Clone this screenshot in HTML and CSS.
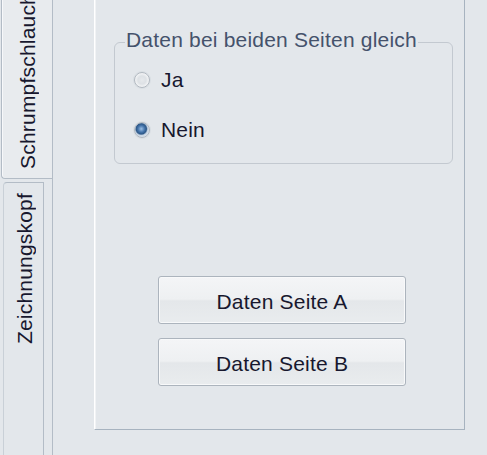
FILE: index.html
```html
<!DOCTYPE html>
<html lang="de">
<head>
<meta charset="utf-8">
<title>Schrumpfschlauch</title>
<link rel="stylesheet" href="styles.css">
</head>
<body>
<div class="window">
  <div class="tabstrip">
    <div class="tab tab-active"><span class="tab-label">Schrumpfschlauch</span></div>
    <div class="tab tab-idle"><span class="tab-label">Zeichnungskopf</span></div>
  </div>
  <div class="page">
    <div class="panel">
      <div class="group">
        <span class="legend">Daten bei beiden Seiten gleich</span>
        <label class="radio-row"><span class="radio"></span><span class="radio-text">Ja</span></label>
        <label class="radio-row second"><span class="radio checked"></span><span class="radio-text">Nein</span></label>
      </div>
      <div class="buttons">
        <button class="btn">Daten Seite A</button>
        <button class="btn">Daten Seite B</button>
      </div>
    </div>
  </div>
</div>
</body>
</html>
```
FILE: styles.css
```css
html, body {
  margin: 0;
  padding: 0;
}
body {
  width: 487px;
  height: 455px;
  overflow: hidden;
  background: #e3e7eb;
  font-family: "Liberation Sans", Arial, sans-serif;
  font-size: 21px;
  letter-spacing: 0.2px;
  color: #17172e;
}
.window {
  display: flex;
  height: 455px;
}
.tabstrip {
  width: 52px;
  flex-shrink: 0;
  display: flex;
  flex-direction: column;
}
.tab {
  display: flex;
  flex-direction: column;
  align-items: center;
  box-sizing: border-box;
}
.tab-label {
  writing-mode: vertical-rl;
  transform: rotate(180deg);
  line-height: 24px;
  white-space: nowrap;
}
.tab-active {
  height: 179px;
  margin-left: 1px;
  width: 51px;
  background: #e8ebee;
  border-left: 1px solid #b3bcc6;
  border-bottom: 1px solid #b3bcc6;
  border-bottom-left-radius: 4px;
  box-shadow: inset 1px 0 0 #f7f8fa;
  justify-content: flex-end;
  padding-bottom: 9px;
  overflow: hidden;
}
.tab-active .tab-label {
  margin-left: 1px;
}
.tab-idle {
  flex: 1;
  margin-top: 3px;
  margin-left: 3px;
  width: 41px;
  background: #e3e7eb;
  border-left: 1px solid #c9d0d7;
  border-top: 1px solid #b3bcc6;
  border-right: 1px solid #b3bcc6;
  border-top-left-radius: 4px;
  justify-content: flex-start;
  padding-top: 10px;
}
.tab-idle .tab-label {
  margin-left: 3px;
}
.page {
  flex: 1;
  border-left: 1px solid #b3bcc6;
  padding-left: 41px;
}
.panel {
  width: 371px;
  height: 430px;
  box-sizing: border-box;
  border-left: 1px solid #ffffff;
  border-right: 1px solid #a7b3bf;
  border-bottom: 1px solid #a7b3bf;
  box-shadow: inset 1px 0 0 #f1f3f5;
  display: flex;
  flex-direction: column;
}
.group {
  margin-top: 42px;
  margin-left: 19px;
  width: 339px;
  height: 122px;
  box-sizing: border-box;
  border: 1px solid #c3c9d0;
  border-radius: 6px;
  padding-left: 20px;
  display: flex;
  flex-direction: column;
  align-items: flex-start;
}
.legend {
  margin-top: -15px;
  margin-left: -10px;
  padding: 0 1px;
  line-height: 24px;
  background: #e3e7eb;
  color: #45526b;
}
.radio-row {
  display: flex;
  align-items: center;
  height: 24px;
  margin-top: 16px;
  line-height: 24px;
}
.radio-row.second {
  margin-top: 26px;
}
.radio {
  width: 16px;
  height: 16px;
  box-sizing: border-box;
  border-radius: 50%;
  border: 1px solid #b2b9c1;
  background: radial-gradient(circle at 50% 50%, #e6e9ec 0, #dde1e5 40%, #eef0f2 62%, #fbfbfc 100%);
  box-shadow: 0 0 0 1px rgba(210, 216, 222, 0.6);
  margin-left: -1px;
  margin-right: 11px;
  flex-shrink: 0;
}
.radio.checked {
  background: radial-gradient(circle at 45% 42%, #9cc0e6 0, #4474aa 30%, #2d5888 46%, #c9d6e4 58%, #f3f5f7 100%);
}
.radio-text {
  display: block;
}
.buttons {
  margin-top: 112px;
  margin-left: 63px;
  display: flex;
  flex-direction: column;
  gap: 14px;
}
.btn {
  width: 248px;
  height: 48px;
  box-sizing: border-box;
  border: 1px solid #acb4bd;
  border-radius: 3px;
  background: linear-gradient(to bottom, #f4f5f7 0%, #eef0f2 48%, #e4e7ea 52%, #e9ecee 100%);
  box-shadow: inset 0 0 0 1px #f8f9fa;
  font-family: "Liberation Sans", Arial, sans-serif;
  font-size: 21px;
  letter-spacing: 0.2px;
  line-height: 24px;
  color: #17172e;
  padding: 3px 0 0 0;
  text-align: center;
}
```
